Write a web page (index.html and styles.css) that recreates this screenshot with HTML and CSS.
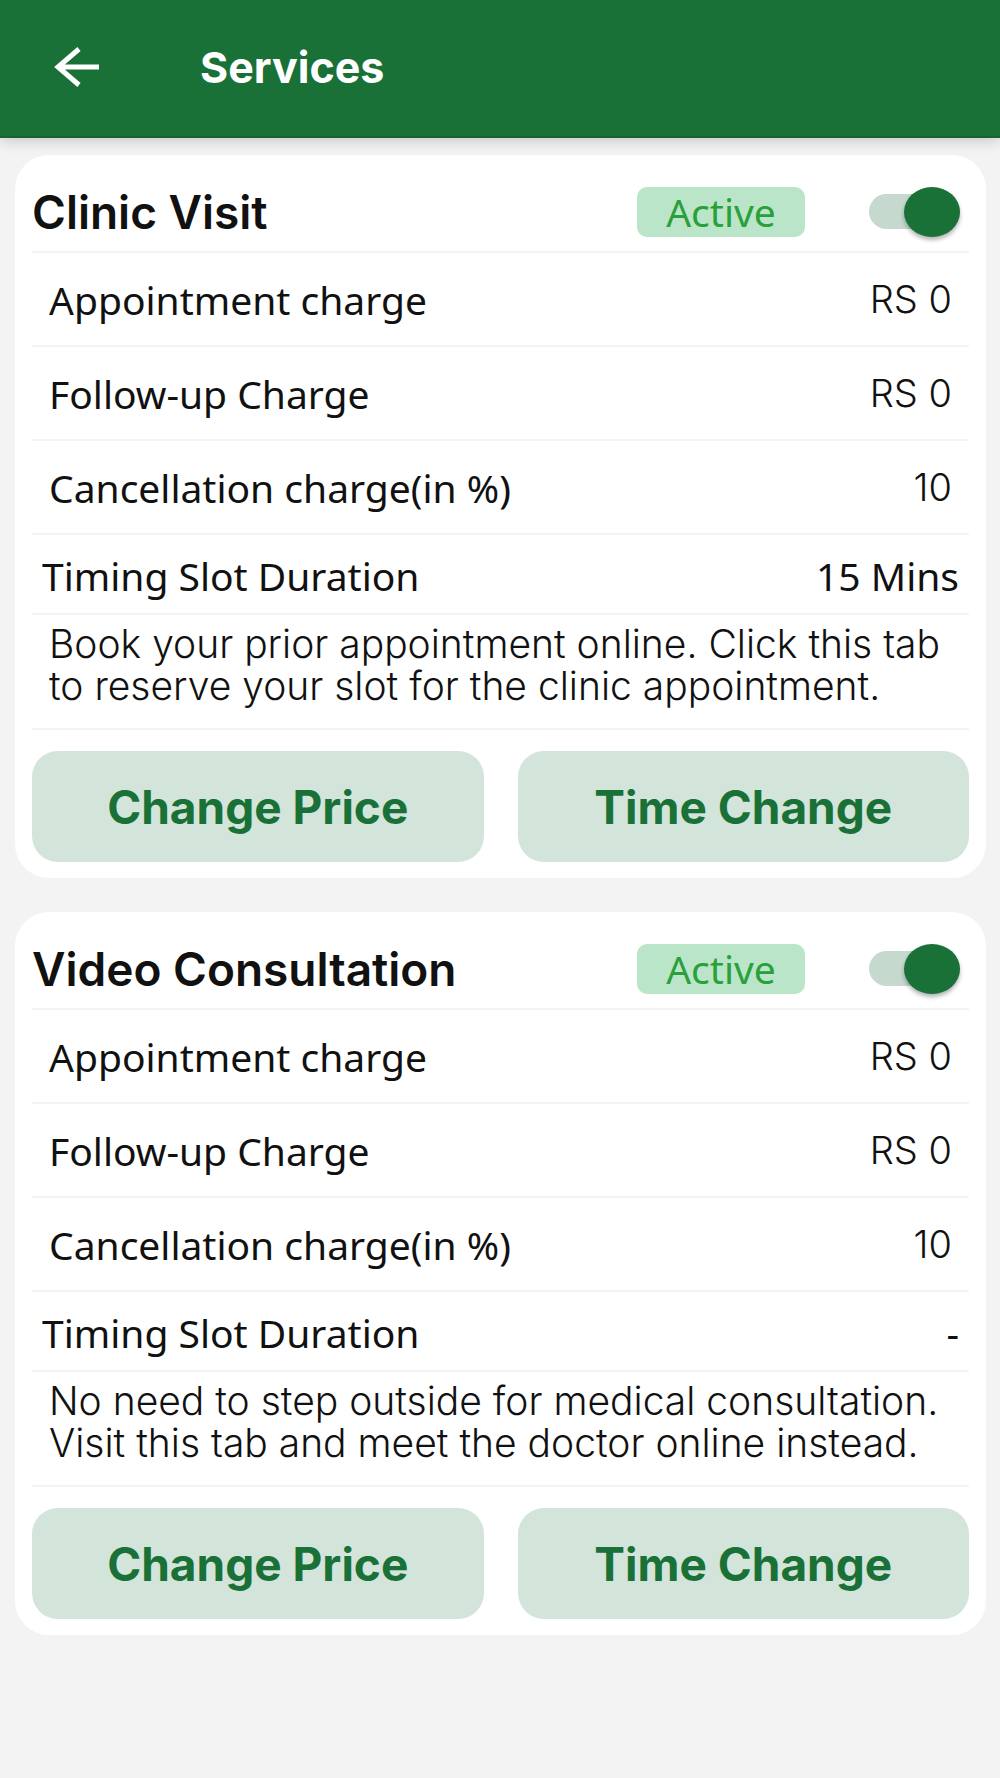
FILE: index.html
```html
<!DOCTYPE html>
<html lang="en">
<head>
    <meta charset="UTF-8">
    <meta name="viewport" content="width=device-width, initial-scale=1.0">
    <title>Services</title>
    <link rel="stylesheet" href="styles.css">
</head>
<body>
    <header class="topbar">
        <button type="button" class="back" aria-label="Back">
            <svg width="46" height="40" viewBox="0 0 46 40" fill="none" stroke="#fff" stroke-width="5">
                <path d="M45 20H4M25 2L4 20l21 18"/>
            </svg>
        </button>
        <h1>Services</h1>
    </header>
    <main>
        <section class="card">
            <div class="card-head">
                <h2 id="clinicTitle">Clinic Visit</h2>
                <span class="badge">Active</span>
                <input type="checkbox" class="switch" aria-labelledby="clinicTitle" checked>
            </div>
            <div class="row"><span>Appointment charge</span><span class="value">RS 0</span></div>
            <div class="row"><span>Follow-up Charge</span><span class="value">RS 0</span></div>
            <div class="row"><span>Cancellation charge(in %)</span><span class="value">10</span></div>
            <div class="row timing"><span>Timing Slot Duration</span><span>15 Mins</span></div>
            <p>Book your prior appointment online. Click this tab to reserve your slot for the clinic appointment.</p>
            <div class="actions">
                <button type="button">Change Price</button>
                <button type="button">Time Change</button>
            </div>
        </section>
        <section class="card">
            <div class="card-head">
                <h2 id="videoTitle">Video Consultation</h2>
                <span class="badge">Active</span>
                <input type="checkbox" class="switch" aria-labelledby="videoTitle" checked>
            </div>
            <div class="row"><span>Appointment charge</span><span class="value">RS 0</span></div>
            <div class="row"><span>Follow-up Charge</span><span class="value">RS 0</span></div>
            <div class="row"><span>Cancellation charge(in %)</span><span class="value">10</span></div>
            <div class="row timing"><span>Timing Slot Duration</span><span>-</span></div>
            <p>No need to step outside for medical consultation. Visit this tab and meet the doctor online instead.</p>
            <div class="actions">
                <button type="button">Change Price</button>
                <button type="button">Time Change</button>
            </div>
        </section>
    </main>
</body>
</html>
```
FILE: styles.css
```css
* {
    box-sizing: border-box;
}
body {
    margin: 0;
    min-height: 100vh;
    font-family: Inter, "Liberation Sans", sans-serif;
    background-color: #f3f3f3;
    color: #111;
}
h1, h2, p {
    margin: 0;
}
button {
    border: none;
    font-family: inherit;
    cursor: pointer;
}
.topbar {
    display: flex;
    align-items: center;
    gap: 100px;
    height: 138px;
    padding: 0 54px 3px;
    background-color: #197138;
    border-bottom: 2px solid #17642f;
    box-shadow: 0 2px 14px rgba(0, 0, 0, 0.2);
    color: white;
}
.back {
    display: flex;
    padding: 0;
    background: none;
}
h1 {
    font-size: 43px;
    font-weight: 700;
    line-height: 48px;
}
main {
    display: flex;
    flex-direction: column;
    gap: 34px;
    padding: 17px 14px 17px 15px;
}
.card {
    padding: 0 17px 16px;
    background-color: white;
    border-radius: 34px;
}
.card-head {
    display: flex;
    align-items: center;
    height: 98px;
    padding: 17px 9px 0 0;
    border-bottom: 2px solid #f3f3f3;
}
h2 {
    flex: 1;
    font-size: 46px;
    font-weight: 600;
    line-height: 52px;
}
.badge {
    width: 168px;
    margin-right: 64px;
    border-radius: 10px;
    background-color: #bae5c9;
    color: #29a03a;
    font-family: "Noto Sans", sans-serif;
    font-size: 39px;
    line-height: 50px;
    text-align: center;
}
.switch {
    appearance: none;
    display: flex;
    align-items: center;
    justify-content: flex-end;
    width: 91px;
    height: 35px;
    margin: 0;
    border-radius: 18px;
    background-color: #c5d9cf;
    cursor: pointer;
}
.switch::before {
    content: "";
    flex: none;
    width: 56px;
    height: 50px;
    border-radius: 50%;
    background-color: #197138;
    box-shadow: 0 3px 4px rgba(0, 0, 0, 0.3);
}
.switch:not(:checked) {
    justify-content: flex-start;
}
.row {
    display: flex;
    align-items: center;
    justify-content: space-between;
    height: 94px;
    padding: 0 17px;
    border-bottom: 2px solid #f3f3f3;
    font-family: "Noto Sans", sans-serif;
    font-size: 39px;
}
.value {
    font-family: Inter, sans-serif;
    font-size: 38px;
    font-weight: 300;
}
.timing {
    height: 80px;
    padding: 2px 10px 0;
}
p {
    padding: 8px 17px 21px;
    border-bottom: 2px solid #f3f3f3;
    font-size: 39px;
    font-weight: 300;
    line-height: 42px;
}
.actions {
    display: grid;
    grid-template-columns: 1fr 1fr;
    gap: 34px;
    padding-top: 21px;
}
.actions button {
    height: 111px;
    border-radius: 26px;
    background-color: #d3e4da;
    color: #197138;
    font-size: 46px;
    font-weight: 700;
}
```
